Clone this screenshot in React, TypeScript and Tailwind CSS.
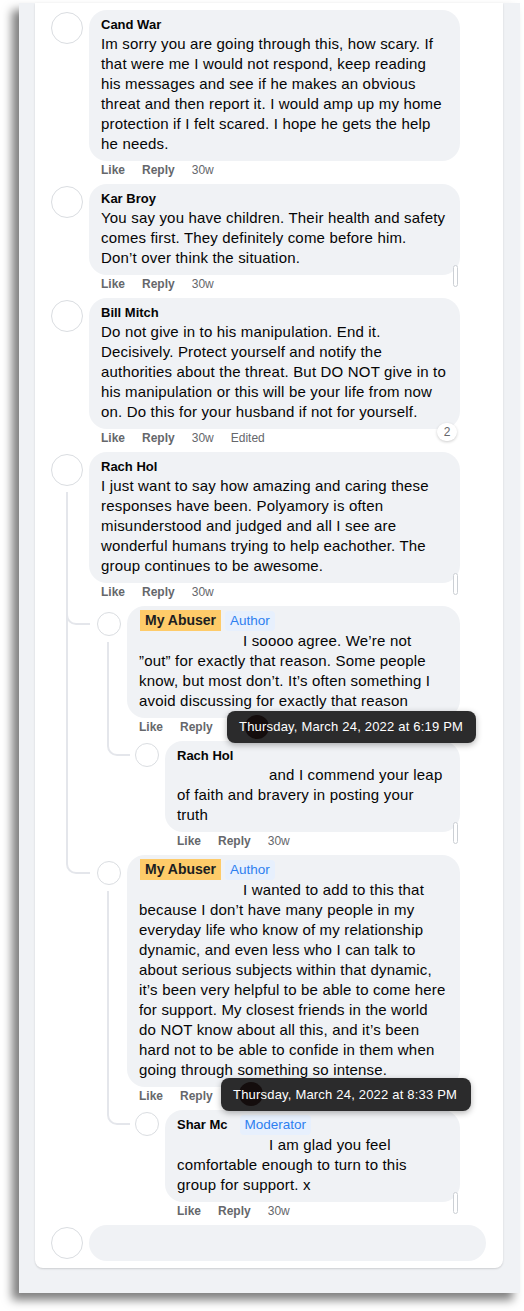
type CommentData = {
  name: string;
  badge?: string;
  highlight?: boolean;
  indent?: boolean;
  text: string;
  time?: string;
  edited?: boolean;
  reactions?: number;
  marker?: boolean;
  tooltip?: { text: string; className: string };
  replies?: CommentData[];
};

const comments: CommentData[] = [
  {
    name: "Cand War",
    text: "Im sorry you are going through this, how scary. If\nthat were me I would not respond, keep reading\nhis messages and see if he makes an obvious\nthreat and then report it. I would amp up my home\nprotection if I felt scared. I hope he gets the help\nhe needs.",
  },
  {
    name: "Kar Broy",
    marker: true,
    text: "You say you have children. Their health and safety\ncomes first. They definitely come before him.\nDon\u2019t over think the situation.",
  },
  {
    name: "Bill Mitch",
    edited: true,
    reactions: 2,
    text: "Do not give in to his manipulation. End it.\nDecisively. Protect yourself and notify the\nauthorities about the threat. But DO NOT give in to\nhis manipulation or this will be your life from now\non. Do this for your husband if not for yourself.",
  },
  {
    name: "Rach Hol",
    marker: true,
    text: "I just want to say how amazing and caring these\nresponses have been. Polyamory is often\nmisunderstood and judged and all I see are\nwonderful humans trying to help eachother. The\ngroup continues to be awesome.",
    replies: [
      {
        name: "My Abuser",
        badge: "Author",
        highlight: true,
        indent: true,
        tooltip: {
          text: "Thursday, March 24, 2022 at 6:19 PM",
          className: "left-[100px] top-[-8px] h-8 w-[249px]",
        },
        text: "I soooo agree. We\u2019re not\n\u201dout\u201d for exactly that reason. Some people\nknow, but most don\u2019t. It\u2019s often something I\navoid discussing for exactly that reason",
        replies: [
          {
            name: "Rach Hol",
            indent: true,
            marker: true,
            text: "and I commend your leap\nof faith and bravery in posting your\ntruth",
          },
        ],
      },
      {
        name: "My Abuser",
        badge: "Author",
        highlight: true,
        indent: true,
        tooltip: {
          text: "Thursday, March 24, 2022 at 8:33 PM",
          className: "left-[94px] top-[-10px] h-[33px] w-[250px]",
        },
        text: "I wanted to add to this that\nbecause I don\u2019t have many people in my\neveryday life who know of my relationship\ndynamic, and even less who I can talk to\nabout serious subjects within that dynamic,\nit\u2019s been very helpful to be able to come here\nfor support. My closest friends in the world\ndo NOT know about all this, and it\u2019s been\nhard not to be able to confide in them when\ngoing through something so intense.",
        replies: [
          {
            name: "Shar Mc",
            badge: "Moderator",
            indent: true,
            marker: true,
            text: "I am glad you feel\ncomfortable enough to turn to this\ngroup for support. x",
          },
        ],
      },
    ],
  },
];

function Comment({
  c,
  level,
  last,
}: {
  c: CommentData;
  level: 0 | 1 | 2;
  last?: boolean;
}) {
  const hasReplies = !!c.replies && c.replies.length > 0;

  return (
    <div className="relative">
      {/* thread connector into this reply */}
      {level === 1 && (
        <>
          {!last && (
            <div className="absolute bottom-0 left-[-31px] top-0 w-[2px] bg-[#e4e6eb]" />
          )}
          <div className="absolute left-[-31px] top-0 h-[19px] w-[24px] rounded-bl-[10px] border-b-2 border-l-2 border-[#e4e6eb]" />
        </>
      )}
      {level === 2 && (
        <>
          {!last && (
            <div className="absolute bottom-0 left-[-28px] top-0 w-[2px] bg-[#e4e6eb]" />
          )}
          <div className="absolute left-[-28px] top-0 h-[15px] w-[23px] rounded-bl-[10px] border-b-2 border-l-2 border-[#e4e6eb]" />
        </>
      )}

      <div className="flex">
        <div className="relative mr-1.5 shrink-0">
          <div
            className={
              level === 0
                ? "mt-[2px] h-8 w-8 rounded-full border border-[#dadde1] bg-white"
                : level === 1
                  ? "mt-[6px] h-6 w-6 rounded-full border border-[#dadde1] bg-white"
                  : "mt-[2px] h-6 w-6 rounded-full border border-[#dadde1] bg-white"
            }
          />
          {hasReplies && (
            <div
              className={
                level === 0
                  ? "absolute bottom-0 left-[15px] top-[40px] w-[2px] bg-[#e4e6eb]"
                  : "absolute bottom-0 left-[10px] top-[36px] w-[2px] bg-[#e4e6eb]"
              }
            />
          )}
        </div>

        <div className="min-w-0 flex-1 pb-[6px]">
          <div
            className={
              c.badge
                ? "relative rounded-[18px] bg-[#f0f2f5] px-3 pb-[7px] pt-1"
                : "relative rounded-[18px] bg-[#f0f2f5] px-3 pb-[7px] pt-1.5"
            }
          >
            <div
              className={
                c.badge
                  ? "flex h-[21px] items-center"
                  : "flex h-[18px] items-center"
              }
            >
              {c.highlight ? (
                <span className="ml-px h-[21px] bg-[#fecb69] px-[5px] text-[14px] font-bold leading-[21px] text-[#1c1e21]">
                  {c.name}
                </span>
              ) : (
                <span
                  className={
                    c.badge
                      ? "mr-2 text-[13px] font-bold text-[#050505]"
                      : "text-[13px] font-bold text-[#050505]"
                  }
                >
                  {c.name}
                </span>
              )}
              {c.badge && (
                <span className="ml-1 h-5 rounded-[4px] bg-[#e7f0fd] px-[5px] text-[13.5px] leading-5 text-[#2d7ff0]">
                  {c.badge}
                </span>
              )}
            </div>
            <p className="whitespace-pre text-[15px] leading-5 tracking-[0.012em] text-[#050505]">
              {c.indent && (
                <span
                  className={
                    level === 1
                      ? "inline-block w-[104px]"
                      : "inline-block w-[92px]"
                  }
                />
              )}
              {c.text}
            </p>

            {c.reactions && (
              <div className="absolute bottom-[-12px] right-[3px] z-10 flex h-[18px] w-5 items-center justify-center rounded-full bg-white text-[12px] text-[#65676b] shadow-[0_1px_3px_rgba(0,0,0,0.2)]">
                {c.reactions}
              </div>
            )}
            {c.marker && (
              <div className="absolute bottom-[-12px] right-[2px] z-10 h-[22px] w-[5px] rounded-full border border-[#ccd0d5] bg-white" />
            )}
          </div>

          <div className="relative mt-px flex h-4 items-center gap-[17px] pl-3 text-[12px] leading-4 text-[#65676b]">
            <span className="font-bold">Like</span>
            <span className="font-bold">Reply</span>
            {/* the hover tooltip sits over the timestamp */}
            {!c.tooltip && <span>{c.time ?? "30w"}</span>}
            {c.edited && <span>Edited</span>}

            {c.tooltip && (
              <div
                className={
                  "absolute z-20 flex items-center overflow-hidden whitespace-nowrap rounded-lg bg-[#2b2b2c] px-3 shadow-[0_2px_6px_rgba(0,0,0,0.3)] " +
                  c.tooltip.className
                }
              >
                <div className="absolute left-[18px] top-[4px] h-6 w-6 rounded-full bg-[#140d0d]" />
                <span className="relative text-[13px] tracking-[0.015em] text-white">
                  {c.tooltip.text}
                </span>
              </div>
            )}
          </div>
        </div>
      </div>

      {hasReplies && (
        <div className={level === 0 ? "ml-[46px]" : "ml-[38px]"}>
          {c.replies!.map((r, i) => (
            <Comment
              key={i}
              c={r}
              level={level === 0 ? 1 : 2}
              last={i === c.replies!.length - 1}
            />
          ))}
        </div>
      )}
    </div>
  );
}

export default function App() {
  return (
    <div className="min-h-screen bg-white pt-[3px] font-['Liberation_Sans',Arial,sans-serif]">
      <div className="ml-[19px] w-[501px] bg-[#f0f2f5] pb-[25px] pl-4 pr-[17px] shadow-[-7px_7px_9px_rgba(0,0,0,0.5)]">
        <div className="rounded-b-lg bg-white shadow-[0_1px_2px_rgba(0,0,0,0.15)]">
          <div className="pl-4 pr-[43px] pt-[7px]">
            {comments.map((c, i) => (
              <Comment key={i} c={c} level={0} />
            ))}
          </div>

          <div className="flex pb-[7px] pl-4 pr-[17px]">
            <div className="mr-1.5 mt-[2px] h-8 w-8 shrink-0 rounded-full border border-[#dadde1] bg-white" />
            <div className="h-9 flex-1 rounded-full bg-[#f0f2f5]" />
          </div>
        </div>
      </div>
    </div>
  );
}
